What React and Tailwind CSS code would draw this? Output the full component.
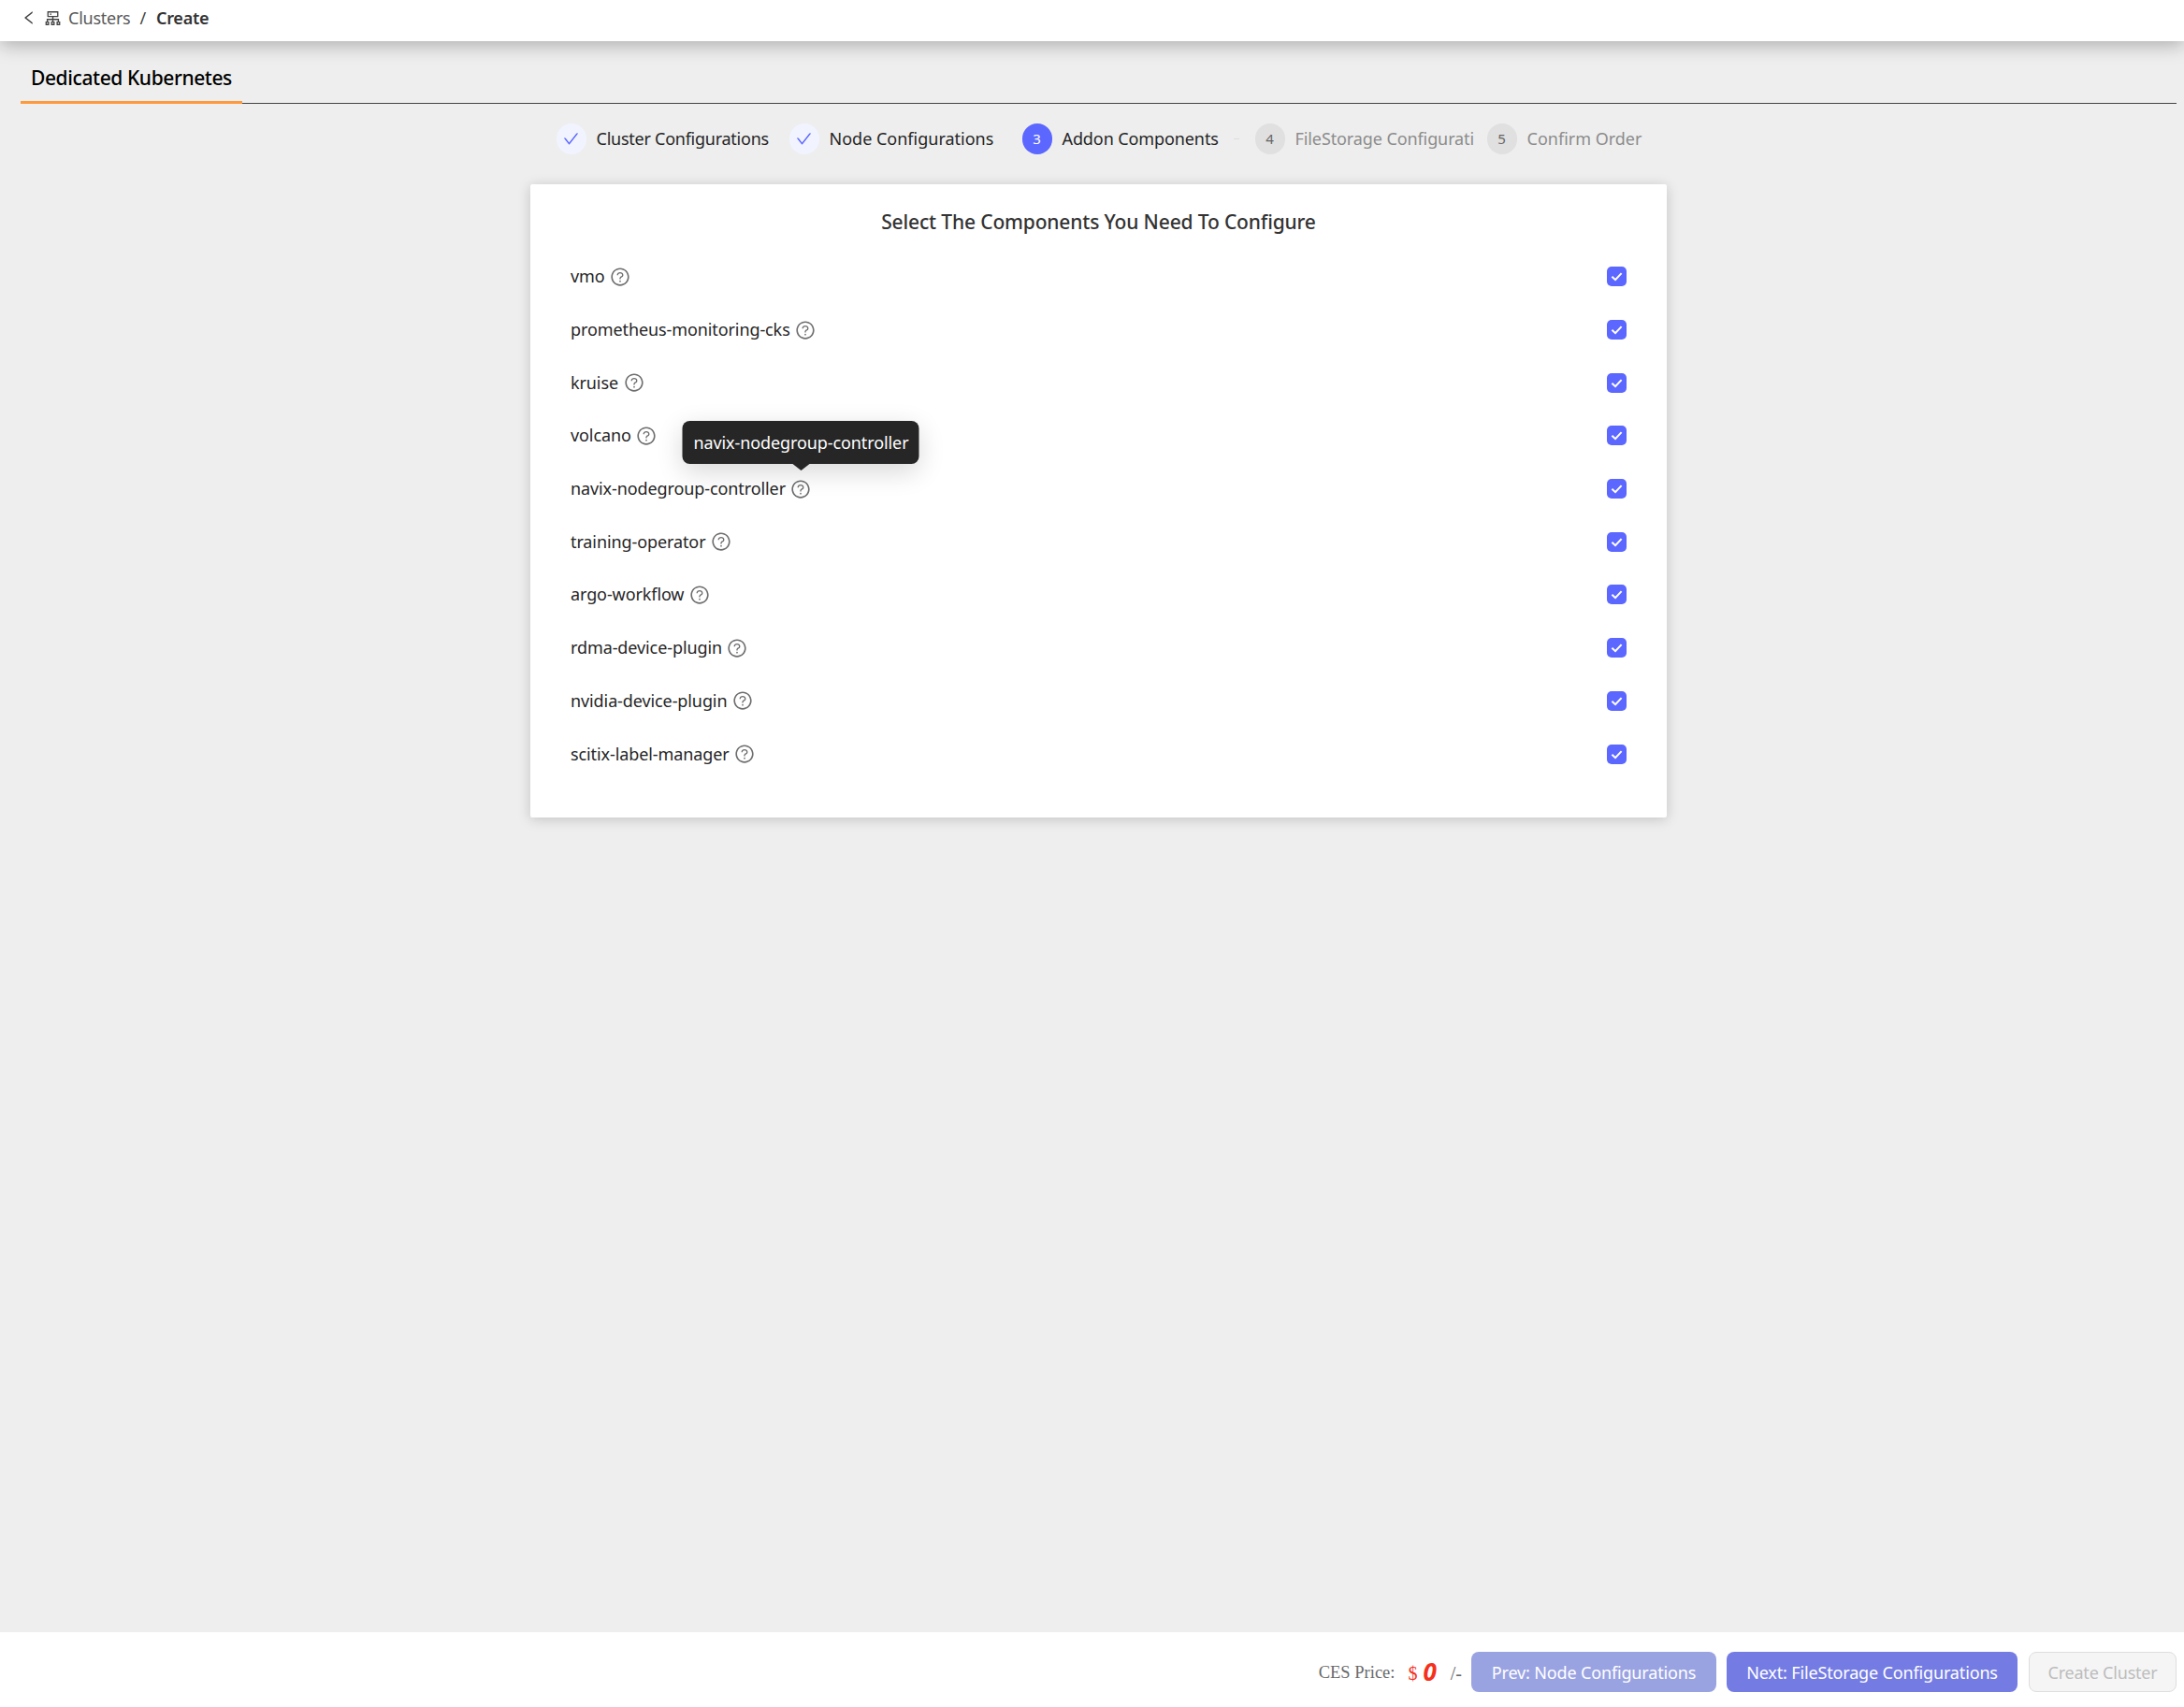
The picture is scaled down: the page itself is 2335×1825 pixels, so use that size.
import React from "react";
import { AiOutlineLeft, AiOutlineCluster, AiOutlineQuestionCircle, AiOutlineCheck } from "react-icons/ai";

const steps = [
  { n: "done", label: "Cluster Configurations", text: "w-[185px] tracking-[-0.25px]", ml: "" },
  { n: "done", label: "Node Configurations", text: "w-[173px] tracking-[0px]", ml: "ml-[21px]" },
  { n: "3", label: "Addon Components", text: "w-[168px] tracking-[-0.1px]", ml: "ml-[33px]" },
  { n: "4", label: "FileStorage Configurati", text: "w-[189px] tracking-[-0.1px]", ml: "ml-[23px]" },
  { n: "5", label: "Confirm Order", text: "w-[120px] tracking-[0px]", ml: "ml-[16px]" },
];

const items = [
  "vmo",
  "prometheus-monitoring-cks",
  "kruise",
  "volcano",
  "navix-nodegroup-controller",
  "training-operator",
  "argo-workflow",
  "rdma-device-plugin",
  "nvidia-device-plugin",
  "scitix-label-manager",
];

function StepCircle({ n }) {
  if (n === "done")
    return (
      <span className="flex h-[33px] w-[32px] shrink-0 items-center justify-center rounded-full bg-[#f1f4ff] text-[#5c67ff]">
        <AiOutlineCheck className="h-[19px] w-[19px]" />
      </span>
    );
  if (n === "3")
    return (
      <span className="flex h-[33px] w-[32px] shrink-0 items-center justify-center rounded-full bg-[#5c67ff] text-[15px] text-white">
        3
      </span>
    );
  return (
    <span className="flex h-[33px] w-[32px] shrink-0 items-center justify-center rounded-full bg-[#e0e0e0] text-[15px] text-[#666666]">
      {n}
    </span>
  );
}

function Step({ step, index }) {
  const pending = index > 2;
  return (
    <div className={`flex shrink-0 items-center gap-[11px] ${step.ml}`}>
      <StepCircle n={step.n} />
      <span
        className={`whitespace-nowrap text-[18px] ${step.text} ${
          pending ? "text-[#8c8c8c]" : "text-[#262626]"
        }`}
      >
        {step.label}
      </span>
      {index === 2 && <span className="-mr-[6px] ml-[4px] h-px w-[6px] bg-[#dcdcdc]" />}
    </div>
  );
}

function Row({ name }) {
  return (
    <div className="flex h-[56.7px] items-center justify-between">
      <div className="flex items-center gap-[7px] text-[18px] tracking-[-0.1px] text-[#262626]">
        <span>{name}</span>
        <span className="relative flex h-[19px] w-[19px] items-center justify-center text-[#6e6e6e]">
          <AiOutlineQuestionCircle className="h-[22px] w-[22px] shrink-0" />
          {name === "navix-nodegroup-controller" && (
            <div className="absolute bottom-[36px] left-1/2 z-20 flex h-[46px] w-[253px] -translate-x-1/2 items-center justify-center rounded-[8px] bg-[#262626] whitespace-nowrap text-[18px] text-white shadow-[0_8px_28px_rgba(0,0,0,0.16)]">
              navix-nodegroup-controller
              <span className="absolute -bottom-[7px] left-1/2 h-0 w-0 -translate-x-1/2 border-x-[9px] border-t-[7px] border-x-transparent border-t-[#262626]" />
            </div>
          )}
        </span>
      </div>
      <span className="flex h-[21px] w-[21px] items-center justify-center rounded-[5px] bg-[#5c67ff]">
        <svg viewBox="0 0 14 14" className="h-[17px] w-[17px]" fill="none">
          <path d="M2.8 7.2 L5.8 10 L11.2 4.2" stroke="#ffffff" strokeWidth="1.7" />
        </svg>
      </span>
    </div>
  );
}

export default function App() {
  return (
    <div
      className="flex h-[1825px] w-[2335px] flex-col overflow-hidden bg-[#eeeeee] text-[#262626]"
      style={{ fontFamily: '"Noto Sans", sans-serif' }}
    >
      <header className="relative z-10 flex h-[44px] shrink-0 items-center bg-white pb-[6px] pl-[22px] text-[18px] tracking-[-0.25px] shadow-[0_4px_20px_rgba(0,0,0,0.28)]">
        <AiOutlineLeft className="h-[20px] w-[18px] text-[#444444]" />
        <AiOutlineCluster className="ml-[6px] h-[21px] w-[21px] text-[#444444]" />
        <span className="ml-[6px] text-[#5a5a5a]">Clusters</span>
        <span className="ml-[10px] text-[#444444]">/</span>
        <span className="ml-[11px] font-semibold text-[#333333]">Create</span>
      </header>

      <main className="flex min-h-0 flex-1 flex-col pl-[22px] pr-[8px]">
        <div className="flex h-[67px] shrink-0 border-b border-[#444444]">
          <div className="-mb-px h-[67px] w-[237px] border-b-[3px] border-[#ff9a3c] pl-[11px] pt-[25px] text-[21px] font-medium leading-[28px] tracking-[-0.4px] text-black">
            Dedicated Kubernetes
          </div>
        </div>

        <div className="mt-[21px] flex justify-center pr-[2px]">
          {steps.map((s, i) => (
            <Step key={s.label} step={s} index={i} />
          ))}
        </div>

        <section className="mx-auto mt-[32px] h-[677px] w-[1215px] rounded-[2px] bg-white px-[43px] pt-[26px] shadow-[0_2px_14px_rgba(0,0,0,0.18)]">
          <h2 className="mb-[16.5px] text-center text-[21px] font-medium leading-[28px] tracking-[-0.15px] text-[#333333]">
            Select The Components You Need To Configure
          </h2>
          {items.map((name) => (
            <Row key={name} name={name} />
          ))}
        </section>
      </main>

      <footer className="flex h-[80px] shrink-0 items-center justify-end bg-white pr-[8px] pt-[5px]">
        <span
          className="mt-[3px] text-[18.5px] text-[#6a6a6a]"
          style={{ fontFamily: '"Liberation Serif", serif' }}
        >
          CES Price:
        </span>
        <span
          className="ml-[14px] mt-[3px] text-[20px] text-[#f5301c]"
          style={{ fontFamily: '"Liberation Serif", serif' }}
        >
          $
        </span>
        <span className="ml-[6px] -mt-[2px] text-[26px] font-bold italic leading-none text-[#f5301c]">0</span>
        <span
          className="ml-[15px] mr-[10px] mt-[3px] text-[20px] text-[#6a6a6a]"
          style={{ fontFamily: '"Liberation Serif", serif' }}
        >
          /-
        </span>
        <button className="h-[43px] w-[262px] rounded-[8px] bg-[#9aa3e2] pt-[2px] text-[18px] tracking-[-0.15px] text-white">
          Prev: Node Configurations
        </button>
        <button className="ml-[11px] h-[43px] w-[311px] rounded-[8px] bg-[#747ce4] pt-[2px] text-[18px] tracking-[-0.15px] text-white">
          Next: FileStorage Configurations
        </button>
        <button className="ml-[12px] h-[43px] w-[158px] rounded-[8px] border border-[#dedede] bg-[#f5f5f5] pt-[2px] text-[18px] tracking-[-0.2px] text-[#bdbdbd]">
          Create Cluster
        </button>
      </footer>
    </div>
  );
}
